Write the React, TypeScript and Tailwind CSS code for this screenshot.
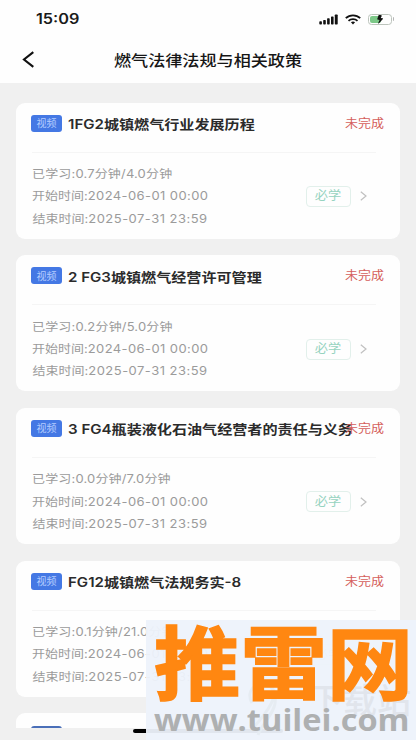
import { FaBolt } from "react-icons/fa";

interface Course {
  title: string;
  learned: string;
  start: string;
  end: string;
}

const courses: Course[] = [
  {
    title: "1FG2城镇燃气行业发展历程",
    learned: "0.7分钟/4.0分钟",
    start: "2024-06-01 00:00",
    end: "2025-07-31 23:59",
  },
  {
    title: "2 FG3城镇燃气经营许可管理",
    learned: "0.2分钟/5.0分钟",
    start: "2024-06-01 00:00",
    end: "2025-07-31 23:59",
  },
  {
    title: "3 FG4瓶装液化石油气经营者的责任与义务",
    learned: "0.0分钟/7.0分钟",
    start: "2024-06-01 00:00",
    end: "2025-07-31 23:59",
  },
  {
    title: "FG12城镇燃气法规务实-8",
    learned: "0.1分钟/21.0分钟",
    start: "2024-06-01 00:00",
    end: "2025-07-31 23:59",
  },
];

function StatusBar() {
  return (
    <div className="flex h-[38px] items-center justify-between pl-9 pr-[22px]">
      <span className="origin-left scale-x-[1.16] text-[14px] font-semibold leading-none text-[#1a1a1a]">
        15:09
      </span>
      <div className="flex items-center gap-[7px] text-[#111]">
        {/* Signal */}
        <svg width="19" height="11" viewBox="0 0 19 11" fill="currentColor">
          <rect x="0.3" y="7.2" width="2.6" height="3.3" rx="0.7" />
          <rect x="4.2" y="6" width="2.6" height="4.5" rx="0.7" />
          <rect x="8.1" y="4.2" width="2.6" height="6.3" rx="0.7" />
          <rect x="12" y="2.4" width="2.6" height="8.1" rx="0.7" />
          <rect x="15.8" y="0.5" width="2.9" height="10" rx="0.7" />
        </svg>
        {/* Wifi */}
        <svg width="16" height="11" viewBox="0 0 16 11" fill="none" stroke="currentColor" strokeWidth="1.8">
          <path d="M0.8 4.2 C4.8 0.3 11.2 0.3 15.2 4.2" />
          <path d="M3.5 6.8 C6 4.5 10 4.5 12.5 6.8" />
          <path d="M5.9 8.2 Q8 6.9 10.1 8.2 L8 10.4 Z" fill="currentColor" stroke="none" />
        </svg>
        {/* Battery */}
        <div className="relative flex items-center">
          <div className="h-[11px] w-[24px] rounded-[3.5px] border border-[#bcc4bc] p-px">
            <div className="h-full w-[11px] rounded-[2px] bg-[#7cc888]" />
          </div>
          <div className="ml-px h-1 w-[1.5px] rounded-r bg-[#b5b5b5]" />
          <FaBolt className="absolute left-[7px] top-[1px] h-[9px] w-[10px] rotate-12 text-[#111]" />
        </div>
      </div>
    </div>
  );
}

function NavBar() {
  return (
    <div className="relative flex h-[44px] items-center justify-center">
      <svg
        className="absolute left-[22px] top-[13px]"
        width="13"
        height="17"
        viewBox="0 0 13 17"
        fill="none"
        stroke="#111"
        strokeWidth="2.1"
      >
        <path d="M11.3 1.2 L2 8.5 L11.3 15.8" />
      </svg>
      <h1 className="translate-x-[0.5px] scale-x-[1.14] text-[15px] font-medium leading-none text-[#161616]">
        燃气法律法规与相关政策
      </h1>
    </div>
  );
}

function CourseCard({ course }: { course: Course }) {
  return (
    <div className="relative h-[136px] shrink-0 rounded-[9px] bg-[#fefefe] pl-[15px] pr-4 pt-3">
      <div className="flex items-center">
        <span className="flex h-[17px] w-[31px] shrink-0 items-center justify-center rounded-[3px] bg-[#4478e4] text-[10px] leading-none text-[#b4ccff]">
          视频
        </span>
        <span className="ml-[5.5px] mt-[3px] origin-left scale-x-[1.16] whitespace-nowrap text-[13px] font-semibold leading-none text-[#2b2b2b]">
          {course.title}
        </span>
      </div>
      <span className="absolute right-[16px] top-[15px] origin-right scale-x-[1.08] text-[12px] leading-none text-[#d55f5c]">
        未完成
      </span>
      <div className="ml-px mr-2 mt-[20px] h-px bg-[#f5f5f5]" />
      <div className="ml-px mt-[10.5px] flex items-center justify-between pr-[17px]">
        <div className="flex origin-left scale-x-[1.13] flex-col whitespace-nowrap text-[11.5px] leading-[22.3px] text-[#9b9b9b]">
          <span className="tracking-[0.15px]">已学习:{course.learned}</span>
          <span>
            开始时间:<span className="tracking-[0.36px]">{course.start}</span>
          </span>
          <span className="ml-[0.5px]">
            结束时间:<span className="tracking-[0.42px]">{course.end}</span>
          </span>
        </div>
        <div className="flex items-center gap-[9px]">
          <span className="flex h-[21px] w-[45px] items-center justify-center rounded-[4px] border border-[#e2f0eb] text-[12px] leading-none text-[#96d3c0]">
            <span className="scale-x-[1.1]">必学</span>
          </span>
          <svg width="7" height="10" viewBox="0 0 7 10" fill="none" stroke="#c0c0c0" strokeWidth="1.2">
            <path d="M0.8 0.7 L6 5 L0.8 9.3" />
          </svg>
        </div>
      </div>
    </div>
  );
}

// Top of the next card, cut by the bottom safe area
function NextCardPeek() {
  return (
    <div className="h-[15px] shrink-0 overflow-hidden rounded-t-[9px] bg-[#fefefe] pl-[15px] pt-[13px]">
      <div className="h-[17px] w-[31px] rounded-[3px] bg-[#4a6fb8]" />
    </div>
  );
}

function SiteBanner() {
  return (
    <div className="absolute bottom-0 right-0 h-[120px] w-[270px] overflow-hidden">
      <div className="absolute inset-0 bg-[#edf2fb]/95" />
      {/* Faint download-site stamp */}
      <span className="absolute left-[163px] top-[64px] whitespace-nowrap text-[34px] font-medium leading-none text-[#e1e5ec]">
        下载站
      </span>
      <svg className="absolute left-[100px] top-[61px]" width="50" height="56" viewBox="0 0 50 56" fill="none" stroke="#e6ecf2" strokeWidth="3">
        <path d="M6 22 C-2 8 14 -2 25 6 C34 13 22 30 8 46 M25 6 C38 26 18 38 12 54" />
      </svg>
      <div className="relative flex flex-col pl-2">
        <span className="mt-[2px] origin-left scale-x-[1.08] whitespace-nowrap text-[80px] font-bold leading-[84px] text-[#ff8711] [-webkit-text-stroke:1.5px_#ff8711]">
          推雷网
        </span>
        <span className="mt-[-3px] origin-left scale-x-[1.05] whitespace-nowrap font-['Open_Sans'] text-[31px] font-bold leading-[32px] text-[#aeb0b1]">
          www.tuilei.com
        </span>
      </div>
    </div>
  );
}

export default function App() {
  return (
    <div className="relative flex h-[740px] w-[416px] flex-col overflow-hidden bg-[#f0f0f0] font-['Inter','Noto_Sans_CJK_SC',sans-serif]">
      <header className="h-[83px] shrink-0 bg-[#fefefe]">
        <StatusBar />
        <NavBar />
      </header>
      <main className="flex h-[645px] shrink-0 flex-col gap-[16.7px] overflow-hidden px-4 pt-[19.5px]">
        {courses.map((course) => (
          <CourseCard key={course.title} course={course} />
        ))}
        <NextCardPeek />
      </main>
      {/* Home indicator */}
      <div className="mx-auto mt-px h-1 w-[150px] shrink-0 rounded-full bg-black" />
      <SiteBanner />
    </div>
  );
}
